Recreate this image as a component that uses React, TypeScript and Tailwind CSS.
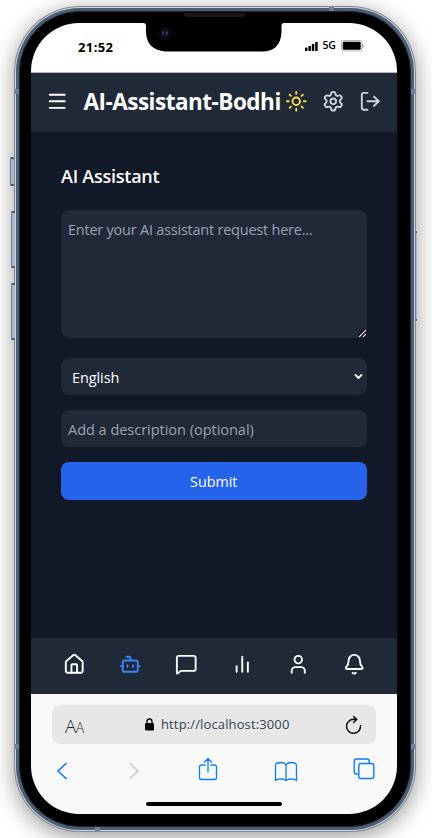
import React from "react";
import { House, Bot, MessageSquare, User, Bell, Sun, Settings, LogOut, Menu } from "lucide-react";

function StatusBar() {
  return (
    <div className="relative flex h-[49px] shrink-0 items-start justify-between bg-white pl-[47px] pr-[32px] pt-[15px] text-black">
      <span className="text-[13px] font-bold leading-[18px] tracking-[0.4px]">21:52</span>
      <div className="flex h-[15px] items-center">
        <svg className="mt-[1px]" width="13" height="9" viewBox="0 0 13 9" fill="black">
          <rect x="0" y="5.500" width="2.500" height="3.500" rx=".6" />
          <rect x="3.400" y="4" width="2.500" height="5" rx=".6" />
          <rect x="6.800" y="2" width="2.500" height="7" rx=".6" />
          <rect x="10.200" y="0" width="2.500" height="9" rx=".6" />
        </svg>
        <span className="ml-[5px] mt-[1px] w-[14px] whitespace-nowrap text-[10.5px] font-semibold tracking-[-0.2px]">5G</span>
        <svg className="ml-[4px]" width="24" height="12" viewBox="0 0 24 12">
          <rect x="0.500" y="0.500" width="20.500" height="10.500" rx="2" fill="none" stroke="#b4b4b4" />
          <rect x="1.700" y="1.700" width="18" height="8" rx="1.200" fill="black" />
          <path d="M21.800 4.300q1.200 1.500 0 3z" fill="#888" stroke="#888" strokeWidth=".5" />
        </svg>
      </div>
      <svg className="absolute left-[110px] top-[-1px]" width="146" height="30" viewBox="0 0 146 30">
        <path d="M0 0H146V1H143Q140.500 1 140.500 4V10Q139.500 29.500 121 29.500H24Q5.500 27.500 5 10V4Q5 1 2 1H0Z" fill="black" />
        <circle cx="24" cy="11" r="6.500" fill="#0b0b0e" />
        <circle cx="24" cy="11" r="3.500" fill="#10131c" />
        <ellipse cx="21.900" cy="11" rx=".8" ry="2" fill="#334a62" />
        <ellipse cx="25.800" cy="11" rx="1" ry="2.100" fill="#243c94" />
      </svg>
    </div>
  );
}

function Header() {
  return (
    <header className="flex h-[60px] shrink-0 items-center border-t border-[#b6bac1] bg-[#1f2937] pb-[2px] pl-[15px] pr-[14px] text-white">
      <Menu size={22.5} />
      <h1 className="ml-[15px] w-[200px] whitespace-nowrap text-[22.5px] font-bold tracking-[-0.5px]">AI-Assistant-Bodhi</h1>
      <Sun className="ml-[1px] shrink-0 text-[#fde047]" size={22.5} />
      <Settings className="ml-[15px] shrink-0 text-[#d1d5db]" size={22.5} />
      <LogOut className="ml-[14.5px] shrink-0 text-[#d1d5db]" size={22.5} />
    </header>
  );
}

function AssistantForm() {
  return (
    <main className="flex flex-1 flex-col bg-[#111827] px-[30px] pt-[31px] text-white">
      <h2 className="h-[26px] whitespace-nowrap text-[18px] font-semibold leading-[26px] tracking-[-0.25px]">AI Assistant</h2>
      <div className="relative mt-[21px] h-[128px]">
        <textarea
          placeholder="Enter your AI assistant request here..."
          className="block h-full w-full resize-none rounded-[8px] bg-[#1f2937] px-[7px] py-[8px] text-[14.5px] leading-[23px] tracking-[-0.23px] outline-none placeholder:text-[#9ca3af]"
        />
        <svg className="absolute bottom-[1px] right-[1px]" width="8" height="8" viewBox="0 0 8 8" fill="none">
          <path d="M0 7L7 0M4 7L7 4" stroke="#05070a" strokeWidth="1.500" />
          <path d="M1 8L8 1M5 8L8 5" stroke="#e5e7eb" strokeWidth="1.100" />
        </svg>
      </div>
      <div className="relative mt-[20px] h-[37px]">
        <select className="block h-full w-full appearance-none rounded-[8px] bg-[#1f2937] px-[11px] pt-[2px] text-[14.5px] tracking-[-0.1px] outline-none">
          <option>English</option>
        </select>
        <svg className="absolute right-[4px] top-[15px]" width="9" height="8" viewBox="0 0 9 8" fill="none">
          <path d="M1 1.500L4.500 5L8 1.500" stroke="white" strokeWidth="1.800" />
        </svg>
      </div>
      <input
        placeholder="Add a description (optional)"
        className="mt-[15px] h-[37px] rounded-[8px] bg-[#1f2937] px-[7px] pt-[2px] text-[14.5px] tracking-[-0.02px] outline-none placeholder:text-[#9ca3af]"
      />
      <button className="mt-[15px] h-[38px] rounded-[8px] bg-[#2563eb] pt-[1px] text-[14.3px]">Submit</button>
    </main>
  );
}

function BottomNav() {
  return (
    <nav className="flex h-[56px] shrink-0 items-center justify-between bg-[#1f2937] pb-[4px] pl-[31.5px] pr-[31px] text-white">
      <House size={22.5} />
      <Bot size={22.5} className="text-[#3b82f6]" />
      <MessageSquare size={22.5} />
      <svg width="22.5" height="22.5" viewBox="0 0 24 24" stroke="currentColor" strokeWidth="2" strokeLinecap="round">
        <path d="M18 20V10M12 20V4M6 20v-6" />
      </svg>
      <User size={22.5} />
      <Bell size={22.5} />
    </nav>
  );
}

function BrowserBar() {
  return (
    <footer className="flex h-[120px] shrink-0 flex-col bg-[#f9f9f9]">
      <div className="ml-[21px] mt-[11px] flex h-[39px] w-[324px] items-center rounded-[8px] bg-[#e7e7e7] pl-[13px] pr-[14px]">
        <span className="mt-[2px] w-[78px] whitespace-nowrap font-['Open_Sans'] text-[18.5px] font-light tracking-[-0.5px] text-[#1f2937]">
          A<span className="text-[14px]">A</span>
        </span>
        <svg width="11" height="13" viewBox="0 0 11 13" className="ml-[1px]">
          <rect x="1" y="5" width="9" height="7.500" rx="1.300" fill="black" />
          <path d="M3 6V3.500a2.500 2.500 0 0 1 5 0V6" fill="none" stroke="black" strokeWidth="1.300" />
        </svg>
        <span className="ml-[6px] mt-[1px] flex-1 whitespace-nowrap text-[13px] tracking-[0.13px] text-[#374151]">http://localhost:3000</span>
        <svg width="17" height="20" viewBox="0 0 17 20" fill="none" stroke="black" strokeWidth="1.400" strokeLinecap="round" strokeLinejoin="round">
          <path d="M15.500 10.800A7 7 0 1 1 8.500 4.300L11.500 4.500M8.600 1.400L11.800 4.500L8.600 7.600" />
        </svg>
      </div>
      <div className="ml-[25px] mt-[12px] flex h-[30px] w-[320px] items-center text-[#0a7cff]">
        <svg width="11" height="18" viewBox="0 0 11 18" fill="none" stroke="currentColor" strokeWidth="1.700" strokeLinecap="round" strokeLinejoin="round">
          <path d="M10 1.500L2 9L10 16.500" />
        </svg>
        <svg className="ml-[62px]" width="11" height="18" viewBox="0 0 11 18" fill="none" stroke="#c7c7cb" strokeWidth="1.500" strokeLinecap="round" strokeLinejoin="round">
          <path d="M1 1.500L9 9L1 16.500" />
        </svg>
        <svg className="mb-[5px] ml-[58px]" width="20" height="24" viewBox="0 0 20 24" fill="none" stroke="currentColor" strokeWidth="1.300" strokeLinecap="round" strokeLinejoin="round">
          <path d="M7 8H3.500Q1.500 8 1.500 10V20.500Q1.500 22.500 3.500 22.500H16.500Q18.500 22.500 18.500 20.500V10Q18.500 8 16.500 8H13M10 15V1.500M6.500 5L10 1.500L13.500 5" />
        </svg>
        <svg className="ml-[56px]" width="24" height="21" viewBox="0 0 24 21" fill="none" stroke="currentColor" strokeWidth="1.300" strokeLinejoin="round">
          <path d="M12 4Q11 1.500 6.500 1.500T1.500 4V19.500Q3 18 6.500 18T12 19.500Q14 18 17.500 18T22.500 19.500V4Q22 1.500 17.500 1.500T12 4ZM12 4V19.500" />
        </svg>
        <svg className="mb-[4px] ml-[55px]" width="22" height="22" viewBox="0 0 22 22" fill="none" stroke="currentColor" strokeWidth="1.400">
          <path d="M5.500 16H3.500Q1.200 16 1.200 13.700V3.200Q1.200 1 3.500 1H14Q16.300 1 16.300 3.200V5.500" />
          <rect x="5.800" y="5.500" width="15" height="15" rx="2.200" />
        </svg>
      </div>
      <div className="ml-[115px] mt-[16px] h-[4px] w-[136px] rounded-full bg-black" />
    </footer>
  );
}

const sideButtons = [
  "left-[10px] top-[157px] h-[29px] w-[4px]",
  "left-[11px] top-[211px] h-[57px] w-[4px]",
  "left-[11px] top-[283px] h-[57px] w-[4px]",
  "left-[415px] top-[231px] h-[90px] w-[2px]",
];

export default function App() {
  return (
    <div className="relative h-[838px] w-[432px] overflow-hidden bg-white pl-[14px] pt-[6px] font-['Open_Sans','Noto_Sans',sans-serif]">
      {sideButtons.map((place) => (
        <div key={place} className={`absolute z-10 rounded-[1px] border-y-2 border-l border-y-[#4c586b] border-l-[#71809a] bg-[#a9b7cb] ${place}`} />
      ))}
      <div className="h-[826px] w-[401.5px] rounded-[66px] bg-[#85888d] p-[1px] shadow-[0_5px_22px_rgba(0,0,0,0.4)]">
        <div className="h-full rounded-[65px] bg-[#cbd5e3] p-[1px]">
          <div className="h-full rounded-[64px] bg-[#4c5d76] p-[3px]">
            <div className="h-full rounded-[61px] border border-[#1c252c] bg-black pl-[11px] pt-[11px]">
              <div className="flex h-[791px] w-[365.5px] flex-col overflow-hidden rounded-[48px]">
                <StatusBar />
                <Header />
                <AssistantForm />
                <BottomNav />
                <BrowserBar />
              </div>
            </div>
          </div>
        </div>
      </div>
      <div className="absolute left-[184px] top-[13px] h-[4px] w-[61px] rounded-b-[3px] bg-[#17181a]" />
      <div className="absolute left-[15px] top-[89px] h-[5px] w-[4px] bg-[#7080a0]" />
      <div className="absolute left-[411px] top-[89px] h-[5px] w-[4px] bg-[#7080a0]" />
      <div className="absolute left-[15px] top-[744px] h-[5px] w-[4px] bg-[#7080a0]" />
      <div className="absolute left-[411px] top-[744px] h-[5px] w-[4px] bg-[#7080a0]" />
      <div className="absolute left-[329px] top-[7px] h-[4px] w-[5px] bg-[#7080a0]" />
      <div className="absolute left-[95px] top-[827px] h-[4px] w-[5px] bg-[#7080a0]" />
    </div>
  );
}
